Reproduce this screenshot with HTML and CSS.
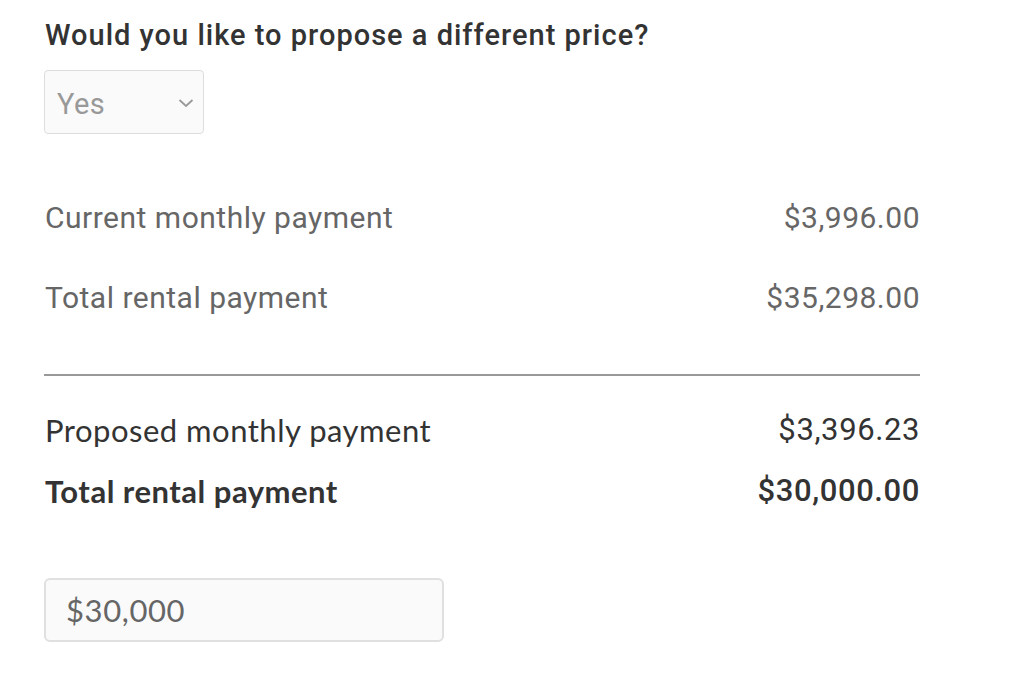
FILE: index.html
```html
<!DOCTYPE html>
<html lang="en">
<head>
    <meta charset="UTF-8">
    <title>Propose price</title>
    <link rel="stylesheet" href="styles.css">
</head>
<body>

<div class="proposal">
    <h2 class="question">Would you like to propose a different price?</h2>

    <div class="select">
        <span class="select-value">Yes</span>
        <svg class="chevron" width="16" height="10" viewBox="0 0 16 10">
            <path d="M1.5 2 L8 8 L14.5 2" fill="none" stroke="#999" stroke-width="1.8"/>
        </svg>
    </div>

    <div class="current">
        <div class="row">
            <span>Current monthly payment</span>
            <span>$3,996.00</span>
        </div>
        <div class="row">
            <span>Total rental payment</span>
            <span>$35,298.00</span>
        </div>
    </div>

    <hr class="divider">

    <div class="proposed">
        <div class="row">
            <span class="label">Proposed monthly payment</span>
            <span class="amount">$3,396.23</span>
        </div>
        <div class="row total">
            <span class="label">Total rental payment</span>
            <span class="amount">$30,000.00</span>
        </div>
    </div>

    <div class="price-input">$30,000</div>
</div>

</body>
</html>
```

FILE: styles.css
```css
body{
    margin: 0;
    background-color: #fff;
}

.proposal{
    width: 876px;
    padding: 16px 0 0 44px;
}

.question{
    font-family: Roboto, sans-serif;
    font-weight: 500;
    font-size: 29px;
    letter-spacing: 1px;
    color: #333;
    margin: 0 0 16px 1px;
    line-height: 38px;
}

.select{
    width: 160px;
    height: 64px;
    box-sizing: border-box;
    border: 1px solid #ddd;
    border-radius: 4px;
    background-color: #fafafa;
    display: flex;
    align-items: center;
    justify-content: space-between;
    padding: 4px 9px 0 12px;
}

.select-value{
    font-family: Roboto, sans-serif;
    font-size: 29px;
    color: #999;
    letter-spacing: 0.5px;
}

.chevron{
    margin-top: -3px;
}

.current{
    margin-top: 53px;
    font-family: Roboto, sans-serif;
    font-size: 30px;
    color: #666;
    letter-spacing: 0.5px;
}

.row{
    display: flex;
    justify-content: space-between;
    align-items: center;
    padding-left: 1px;
}

.current .row{
    height: 60px;
    margin-bottom: 20px;
}

.divider{
    border: none;
    border-top: 2px solid #999;
    margin: 47px 0 0 0;
}

.proposed{
    margin-top: 23px;
}

.proposed .row{
    height: 61px;
    font-size: 31px;
    color: #333;
}

.proposed .label{
    font-family: Lato, sans-serif;
    letter-spacing: 0.5px;
}

.proposed .amount{
    font-family: Roboto, sans-serif;
    letter-spacing: 0.6px;
}

.proposed .total{
    font-weight: 700;
}

.total .amount{
    font-weight: 500;
}

.price-input{
    margin-top: 57px;
    width: 400px;
    height: 64px;
    box-sizing: border-box;
    border: 2px solid #e0e0e0;
    border-radius: 6px;
    background-color: #fafafa;
    padding: 0 20px;
    display: flex;
    align-items: center;
    font-family: Lato, sans-serif;
    font-size: 31px;
    letter-spacing: 0.6px;
    color: #666;
}
```
